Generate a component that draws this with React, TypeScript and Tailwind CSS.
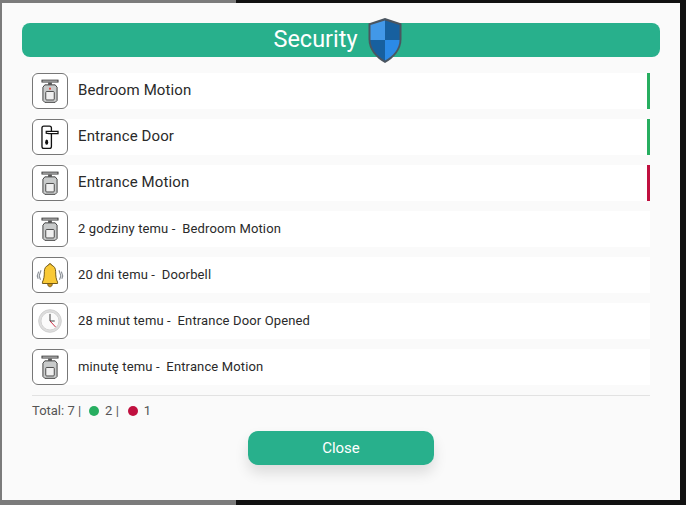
import React from "react";

const MotionIcon = ({ dot = false }: { dot?: boolean }) => (
  <svg width="36" height="36" viewBox="0 0 36 36" fill="none">
    <rect x="9.500" y="6.500" width="17" height="2" fill="#e5e5e5" stroke="#333" strokeWidth="1" />
    <path d="M16 9h4v2.500h-4z" fill="#555" />
    <path d="M12.500 11.500h11l2 2.500v14l-2 2h-11l-2-2v-14z" fill="#c9cbcb" stroke="#3a3a3a" strokeWidth="1" />
    <rect x="13.500" y="18.500" width="9" height="9" rx="1" fill="#f0f0f0" stroke="#444" strokeWidth="1" />
    {dot && <rect x="17" y="14.500" width="2" height="2" fill="#e0433a" />}
  </svg>
);

const DoorIcon = () => (
  <svg width="36" height="36" viewBox="0 0 36 36" fill="none">
    <rect x="9.500" y="6.500" width="10" height="23.500" rx="2" fill="#fff" stroke="#111" strokeWidth="1.400" />
    <path d="M14 12h12.500v2.500h-9.500l-3-.5z" fill="#fff" stroke="#111" strokeWidth="1.300" />
    <ellipse cx="14.500" cy="23.500" rx="1.600" ry="2.800" fill="#111" />
  </svg>
);

const BellIcon = () => (
  <svg width="36" height="36" viewBox="0 0 36 36" fill="none">
    <path d="M18 6c-1 0-1.500.500-1.500 1.500-3 1-4.500 3.500-4.500 7 0 5-.500 8-2 11v1.500h16v-1.500c-1.500-3-2-6-2-11 0-3.500-1.500-6-4.500-7 0-1-.500-1.500-1.500-1.500z" fill="#f9c936" stroke="#6b5312" strokeWidth="1" />
    <path d="M15.500 27h5c0 2.500-1 3.500-2.500 3.500s-2.500-1-2.500-3.500z" fill="#c98f16" stroke="#6b5312" strokeWidth=".8" />
    <path d="M8.500 13l-2 6 1.500 4M6 14.500l-1.500 4.500 1 3M27.500 13l2 6-1.500 4M30 14.500l1.500 4.500-1 3" stroke="#8a8f96" strokeWidth="1.200" />
  </svg>
);

const ClockIcon = () => (
  <svg width="36" height="36" viewBox="0 0 36 36" fill="none">
    <circle cx="18" cy="18" r="12" fill="#dedede" stroke="#cfcfcf" strokeWidth="1" />
    <circle cx="18" cy="18" r="9.500" fill="#fbfbfb" stroke="#d2d2d2" strokeWidth="1" />
    <path d="M18 10.500v7.500h5" stroke="#333" strokeWidth="1" />
    <path d="M18 18l6 6.500" stroke="#c8233a" strokeWidth="1" />
  </svg>
);

const Shield = () => (
  <svg width="36" height="47" viewBox="0 0 36 47" fill="none" className="shrink-0">
    <path d="M18 1L34.500 6.500V22C34.500 33 27 41 18 46 9 41 1.500 33 1.500 22V6.500Z" fill="#4a5560" />
    <path d="M18 3.500V23H3.500V8Z" fill="#4298e8" />
    <path d="M18 3.500V23H32.500V8Z" fill="#17609f" />
    <path d="M3.500 23H18V43.500C10 39 3.500 32 3.500 23Z" fill="#17609f" />
    <path d="M32.500 23H18V43.500C26 39 32.500 32 32.500 23Z" fill="#2b8ae6" />
  </svg>
);

const rows = [
  { icon: <MotionIcon dot />, label: "Bedroom Motion", bar: "bg-[#27ae60]", big: true },
  { icon: <DoorIcon />, label: "Entrance Door", bar: "bg-[#27ae60]", big: true },
  { icon: <MotionIcon />, label: "Entrance Motion", bar: "bg-[#c0103f]", big: true },
  { icon: <MotionIcon />, label: "2 godziny temu -  Bedroom Motion" },
  { icon: <BellIcon />, label: "20 dni temu -  Doorbell" },
  { icon: <ClockIcon />, label: "28 minut temu -  Entrance Door Opened" },
  { icon: <MotionIcon />, label: "minutę temu -  Entrance Motion" },
];

export default function App() {
  return (
    <div className="relative h-[505px] w-[686px] overflow-hidden bg-[#111111] font-['Roboto',sans-serif]">
      <div className="h-full w-[236px] bg-[#7b7b7b]" />
      <div className="absolute left-[2px] top-[3px] flex h-[497px] w-[678px] flex-col bg-[#fafafa] px-5 pt-5">
        <div className="flex h-[34px] items-center justify-center rounded-[8px] bg-[#28b08c] text-white">
          <span className="-mt-[1px] text-[23.500px] leading-none">Security</span>
          <span className="ml-[9px] mr-[6px]"><Shield /></span>
        </div>

        <div className="mt-4 flex flex-col gap-[10px] px-[10px]">
          {rows.map((row) => (
            <div key={row.label} className="flex h-9 items-center bg-white">
              <div className="flex h-9 w-9 shrink-0 items-center justify-center rounded-[6px] border border-[#777777] bg-white">
                {row.icon}
              </div>
              <span className={`ml-[10px] -mt-[1px] flex-1 whitespace-pre text-[#2a2a2a] ${row.big ? "text-[15px] tracking-[0.12px]" : "text-[13px] tracking-[0.14px]"}`}>
                {row.label}
              </span>
              {row.bar && <div className={`h-9 w-[3px] ${row.bar}`} />}
            </div>
          ))}
        </div>

        <div className="mx-[10px] mt-[10px] flex items-center border-t border-[#e2e2e2] pt-[5px] text-[13px] text-[#555555]">
          <span>Total: 7 |</span>
          <span className="ml-[8px] h-[10px] w-[10px] rounded-full bg-[#27ae60]" />
          <span className="ml-[6px]">2 |</span>
          <span className="ml-[9px] h-[10px] w-[10px] rounded-full bg-[#c0103f]" />
          <span className="ml-[6px]">1</span>
        </div>

        <button className="mx-auto mt-[10px] h-[34px] w-[186px] rounded-[10px] bg-[#28b08c] pt-px text-[15px] text-white shadow-[0_8px_14px_rgba(0,0,0,0.12)]">
          Close
        </button>
      </div>
    </div>
  );
}
